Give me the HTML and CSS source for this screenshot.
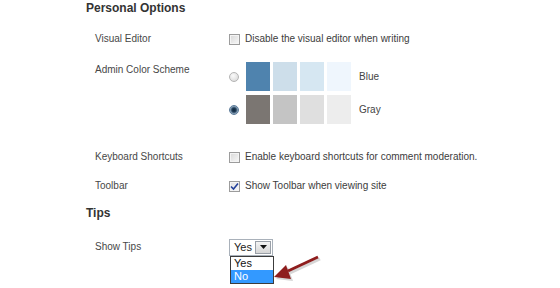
FILE: index.html
```html
<!DOCTYPE html>
<html lang="en">
<head>
    <meta charset="UTF-8">
    <title>Profile - Personal Options</title>
    <link rel="stylesheet" href="styles.css">
</head>
<body>
<div class="options">
    <h3 class="section-title">Personal Options</h3>

    <div class="row row-editor">
        <div class="label">Visual Editor</div>
        <div class="field">
            <span class="checkbox"></span>
            <span>Disable the visual editor when writing</span>
        </div>
    </div>

    <div class="row row-scheme">
        <div class="label">Admin Color Scheme</div>
        <div class="schemes">
            <div class="scheme">
                <span class="radio"></span>
                <span class="swatch" style="background:#4f83ae"></span>
                <span class="swatch" style="background:#cddeea"></span>
                <span class="swatch" style="background:#d6e7f2"></span>
                <span class="swatch" style="background:#eff6fd"></span>
                <span class="scheme-name">Blue</span>
            </div>
            <div class="scheme">
                <span class="radio checked"></span>
                <span class="swatch" style="background:#7b7672"></span>
                <span class="swatch" style="background:#c4c4c4"></span>
                <span class="swatch" style="background:#dfdfdf"></span>
                <span class="swatch" style="background:#ededed"></span>
                <span class="scheme-name">Gray</span>
            </div>
        </div>
    </div>

    <div class="row row-shortcuts">
        <div class="label">Keyboard Shortcuts</div>
        <div class="field">
            <span class="checkbox"></span>
            <span>Enable keyboard shortcuts for comment moderation.</span>
        </div>
    </div>

    <div class="row row-toolbar">
        <div class="label">Toolbar</div>
        <div class="field">
            <span class="checkbox checked">
                <svg width="9" height="9" viewBox="0 0 9 9"><path d="M1 4.5 L3.5 7 L8 1.5" fill="none" stroke="#24419a" stroke-width="1.6"/></svg>
            </span>
            <span>Show Toolbar when viewing site</span>
        </div>
    </div>

    <h3 class="section-title tips-title">Tips</h3>

    <div class="row row-tips">
        <div class="label">Show Tips</div>
        <div class="field">
            <div class="select">
                <span class="select-value">Yes</span>
                <span class="select-button">
                    <svg width="7" height="4" viewBox="0 0 7 4"><path d="M0 0 H7 L3.5 4 Z" fill="#111"/></svg>
                </span>
                <div class="select-list">
                    <div class="select-item">Yes</div>
                    <div class="select-item active">No</div>
                </div>
            </div>
        </div>
    </div>
</div>

<svg class="pointer" width="70" height="40" viewBox="0 0 70 40">
    <g transform="translate(2,2)" fill="#bbb" stroke="#bbb" opacity="0.6">
        <path d="M44 2 L14 16" stroke-width="3" fill="none"/>
        <path d="M0 22 L12 10 L17 24 Z" stroke="none"/>
    </g>
    <path d="M44 2 L14 16" stroke="#8e1d1d" stroke-width="3" fill="none"/>
    <path d="M0 22 L12 10 L17 24 Z" fill="#8e1d1d"/>
</svg>
</body>
</html>
```

FILE: styles.css
```css
body {
    margin: 0;
    padding: 0;
    background-color: #fff;
    font-family: "Liberation Sans", Arial, sans-serif;
    font-size: 10px;
    color: #3c3c3c;
    position: relative;
    height: 288px;
    overflow: hidden;
}

.options {
    padding-left: 86px;
}

.section-title {
    margin: 0;
    font-size: 12px;
    line-height: 16px;
    font-weight: bold;
    color: #333;
}

.tips-title {
    margin-top: 11px;
}

.row {
    display: flex;
    align-items: flex-start;
    padding-left: 9px;
    line-height: 16px;
}

.label {
    width: 134px;
    flex-shrink: 0;
    color: #474747;
}

.field {
    display: flex;
    align-items: center;
    gap: 5px;
    height: 16px;
}

.row-editor {
    margin-top: 15px;
}

.row-scheme {
    margin-top: 15px;
}

.row-shortcuts {
    margin-top: 25px;
}

.row-toolbar {
    margin-top: 13px;
}

.row-tips {
    margin-top: 18px;
}

.checkbox {
    width: 9px;
    height: 9px;
    border: 1px solid #9c9c9c;
    box-shadow: inset 0 0 0 1px #f4f4f4;
    background: linear-gradient(135deg, #d8d8d8, #f8f8f8);
    display: flex;
    align-items: center;
    justify-content: center;
}

.checkbox.checked {
    background: linear-gradient(135deg, #e0e0e0, #fafafa);
}

.schemes {
    display: flex;
    flex-direction: column;
    gap: 4px;
}

.scheme {
    display: flex;
    align-items: center;
    gap: 3px;
}

.radio {
    width: 8px;
    height: 8px;
    border: 1px solid #b4b4b4;
    border-radius: 50%;
    background: radial-gradient(circle at 40% 35%, #fafafa, #d4d4d4);
    margin-right: 4px;
}

.radio.checked {
    border-color: #5a7a99;
    background: radial-gradient(circle, #0d2437 0, #1d3b57 2px, #9cb3c8 4px, #e8eef4 5px);
}

.swatch {
    width: 24px;
    height: 29px;
}

.scheme-name {
    margin-left: 5px;
    color: #444;
}

.select {
    position: relative;
    display: flex;
    align-items: center;
    width: 42px;
    height: 15px;
    border: 1px solid #a9b1ba;
    background: #fff;
    font-size: 11px;
}

.select-value {
    flex: 1;
    padding-left: 4px;
    color: #222;
}

.select-button {
    width: 14px;
    height: 11px;
    margin-right: 1px;
    border: 1px solid #9aa0a8;
    background: linear-gradient(#f4f4f4, #d6d6d6);
    display: flex;
    align-items: center;
    justify-content: center;
}

.select-list {
    position: absolute;
    top: 16px;
    left: 0;
    width: 42px;
    border: 1px solid #3c3c3c;
    background: #fff;
}

.select-item {
    line-height: 13px;
    padding-left: 3px;
    color: #111;
}

.select-item.active {
    background: #3399ff;
    color: #fff;
}

.pointer {
    position: absolute;
    left: 274px;
    top: 255px;
}
```
